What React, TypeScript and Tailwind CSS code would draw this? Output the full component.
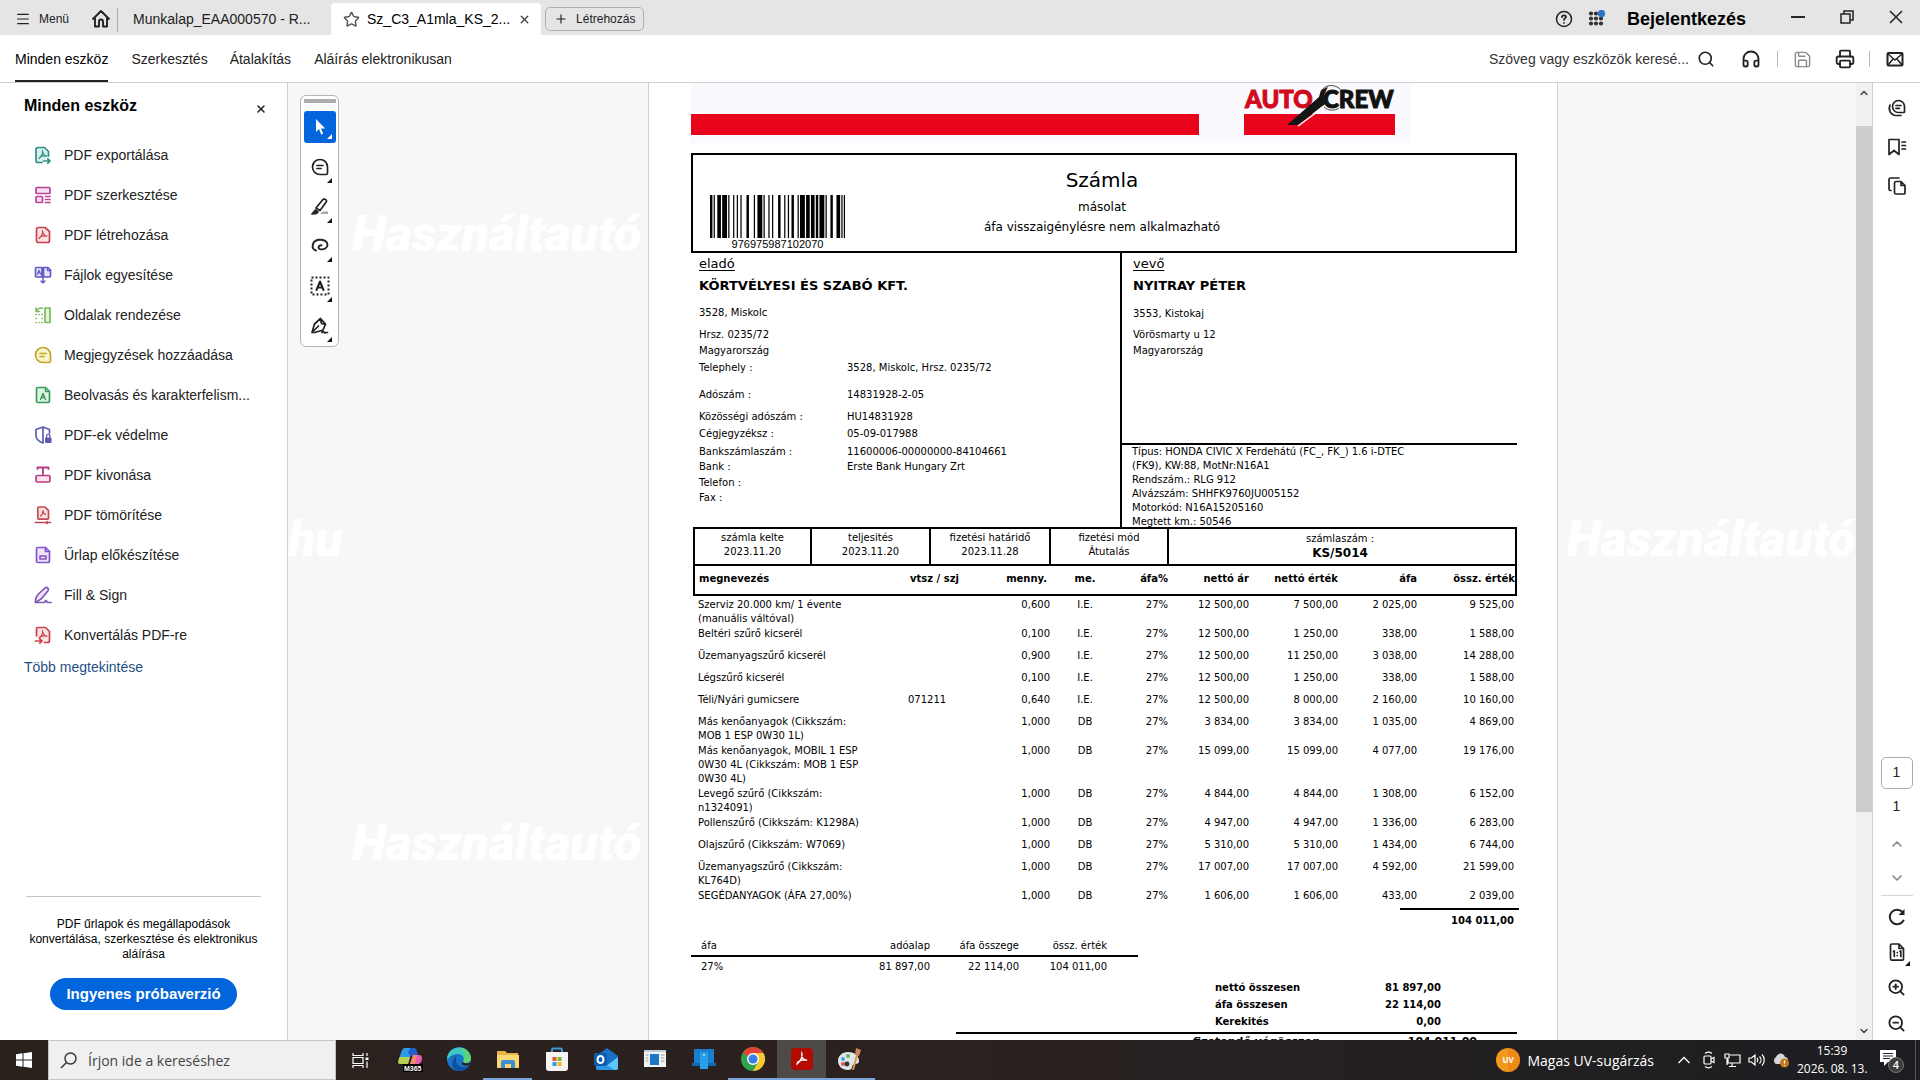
import type { ReactNode } from "react";
import {
  Headphones,
  Search,
  Printer,
  Star,
  ChevronUp,
  ChevronDown,
  ZoomIn,
  ZoomOut,
  Menu,
  Plus,
  X,
  Save,
} from "lucide-react";

type IconProps = { color?: string };

function Glyph({ children, size = 20, color = "#222" }: { children: ReactNode; size?: number; color?: string }) {
  return (
    <svg
      width={size}
      height={size}
      viewBox="0 0 20 20"
      fill="none"
      stroke={color}
      strokeWidth="1.7"
      strokeLinecap="round"
      strokeLinejoin="round"
      className="shrink-0"
      aria-hidden="true"
    >
      {children}
    </svg>
  );
}

const trefoil = "M9.500 5.500c.5 3-1 6-3.500 8M9.600 6.500c.3 2.500 1.900 4.300 4.400 4.700M6.800 12c2-1.100 4.400-1.400 7-.8";

function ExportIcon() {
  return (
    <Glyph color="#2a8f86">
      <path d="M9 17.500H5a2 2 0 0 1-2-2v-11a2 2 0 0 1 2-2h6.500l4 4V11" fill="#d9f1ee" />
      <path d={trefoil} strokeWidth="1.200" />
      <path d="M10.500 16h6.500M14.800 13.800 17 16l-2.200 2.200" />
    </Glyph>
  );
}
function EditIcon() {
  return (
    <Glyph color="#b8429a">
      <rect x="3" y="2.500" width="14" height="6" rx="1" fill="#f9dff2" />
      <rect x="3" y="11.500" width="6.500" height="6" rx="1" fill="#f9dff2" />
      <path d="M12.500 11.500H17M12.500 14.500H17M12.500 17.500H17" />
    </Glyph>
  );
}
function CreateIcon() {
  return (
    <Glyph color="#c9434d">
      <path d="M5.500 2.500H12l4.500 4v9a2 2 0 0 1-2 2h-9a2 2 0 0 1-2-2v-11a2 2 0 0 1 2-2Z" fill="#fbe1e2" />
      <path d={trefoil} strokeWidth="1.200" />
    </Glyph>
  );
}
function MergeIcon() {
  return (
    <Glyph color="#5f5cc4">
      <path d="M3.500 2.500H9v9.500H3.500a1 1 0 0 1-1-1v-7.500a1 1 0 0 1 1-1ZM10.500 2.500H15l2.500 2.500v6a1 1 0 0 1-1 1h-6Z" fill="#e4e3fa" />
      <path d="M4.500 9 6 5.500 7.500 9M10 12v6M8 16l2 2 2-2M14.500 3v2.500H17" strokeWidth="1.400" />
    </Glyph>
  );
}
function OrganizeIcon() {
  return (
    <Glyph color="#7cb85a">
      <rect x="12" y="3" width="5" height="14.500" fill="#e5f5dc" />
      <path d="M3 9.500h.1M3 13.500h.1M3 17.500h.1M6 17.500h.1M9 17.500h.1M9 9.500h.1M9 13.500h.1M6 9.500h.1" />
      <path d="M3.500 6.500c.5-2.500 3-4 6-3.300M3 3v3.500h3.500" strokeWidth="1.500" />
    </Glyph>
  );
}
function CommentIcon({ color = "#bfa52a" }: IconProps) {
  return (
    <Glyph color={color}>
      <path d="M10 2.500a7.500 7.500 0 1 0 0 15h6a1.500 1.500 0 0 0 1.500-1.500v-6A7.500 7.500 0 0 0 10 2.500Z" fill={color === "#222" ? "none" : "#faf4cc"} />
      <path d="M7 8.500h6M7 11.500h4" />
    </Glyph>
  );
}
function OcrIcon() {
  return (
    <Glyph color="#3b9b57">
      <path d="M5 2.500h7.500l4 4v9a2 2 0 0 1-2 2H5a1.500 1.500 0 0 1-1.500-1.500V4A1.500 1.500 0 0 1 5 2.500Z" fill="#ddf3e3" />
      <path d="M12.500 2.500v4h4M7.500 14.500 10 8.500l2.500 6M8.500 12.500h3" strokeWidth="1.400" />
    </Glyph>
  );
}
function ProtectIcon() {
  return (
    <Glyph color="#5c5bb0">
      <path d="M10 2 3 4.500v6c0 3.500 3 6 7 7.500ZM10 2l6.500 2.500V8" />
      <rect x="12" y="12.500" width="6.500" height="5.500" rx="1" fill="#5c5bb0" stroke="none" />
      <path d="M13.500 12.500v-1.300a1.700 1.700 0 0 1 3.500 0v1.300" strokeWidth="1.300" />
    </Glyph>
  );
}
function RedactIcon() {
  return (
    <Glyph color="#b83e83">
      <path d="M4.500 4V2.500h11V4M10 2.500V9" strokeWidth="1.900" />
      <rect x="3" y="10.500" width="14" height="6.500" rx="1.500" fill="#fbe0ee" />
    </Glyph>
  );
}
function CompressIcon() {
  return (
    <Glyph color="#bf4950">
      <path d="M6 2h6l3.500 3.500V13a1.200 1.200 0 0 1-1.200 1.200H6A1.200 1.200 0 0 1 4.800 13V3.200A1.200 1.200 0 0 1 6 2Z" fill="#fbe1e2" />
      <path d="M10 5.500c0 2.500-1 4.500-2.500 5.500M10 6c.2 2 1.200 3 2.700 3.300" strokeWidth="1.200" />
      <path d="M2.500 17.500h15M14 16.500v2" />
    </Glyph>
  );
}
function FormIcon() {
  return (
    <Glyph color="#8455c4">
      <path d="M5 2.500h7.500l4 4v9a2 2 0 0 1-2 2H5a1.500 1.500 0 0 1-1.500-1.500V4A1.500 1.500 0 0 1 5 2.500Z" fill="#eee3fb" />
      <path d="M12.500 2.500v4h4" />
      <rect x="7" y="11" width="6" height="3" />
    </Glyph>
  );
}
function SignIcon() {
  return (
    <Glyph color="#7c55b4">
      <path d="M2.500 17.500c-.3-4 1-6.500 3-8.500l6.500-6c2-1.500 4.500.8 3 2.800L9.500 12.500c-1.500 2-4 3-7 5Z" fill="#ede4f8" />
      <path d="M4 17.500h7c1 0 1-2 2-2s.5 2 1.500 2H18" />
    </Glyph>
  );
}
function ConvertIcon() {
  return (
    <Glyph color="#c9434d">
      <path d="M3.500 11V4a1.500 1.500 0 0 1 1.500-1.500h7.500l4 4v9a2 2 0 0 1-2 2h-3" fill="#fbe1e2" />
      <path d={trefoil} strokeWidth="1.200" />
      <path d="M2.500 16H9M6.800 13.800 9 16l-2.200 2.200" />
    </Glyph>
  );
}

const tools: { label: string; icon: ReactNode }[] = [
  { label: "PDF exportálása", icon: <ExportIcon /> },
  { label: "PDF szerkesztése", icon: <EditIcon /> },
  { label: "PDF létrehozása", icon: <CreateIcon /> },
  { label: "Fájlok egyesítése", icon: <MergeIcon /> },
  { label: "Oldalak rendezése", icon: <OrganizeIcon /> },
  { label: "Megjegyzések hozzáadása", icon: <CommentIcon /> },
  { label: "Beolvasás és karakterfelism...", icon: <OcrIcon /> },
  { label: "PDF-ek védelme", icon: <ProtectIcon /> },
  { label: "PDF kivonása", icon: <RedactIcon /> },
  { label: "PDF tömörítése", icon: <CompressIcon /> },
  { label: "Űrlap előkészítése", icon: <FormIcon /> },
  { label: "Fill & Sign", icon: <SignIcon /> },
  { label: "Konvertálás PDF-re", icon: <ConvertIcon /> },
];

function TitleBar() {
  return (
    <header className="flex h-[35px] shrink-0 items-center bg-[#e5e5e5] text-[#222]">
      <button className="ml-[15px] flex h-full items-center gap-2 pt-[3px] text-[12px]">
        <Menu size={16} strokeWidth={1.8} />
        Menü
      </button>
      <button aria-label="Kezdőlap" className="ml-[22px] flex h-full items-center pt-[2px]">
        <svg width="20" height="20" viewBox="0 0 20 20" fill="none" stroke="#222" strokeWidth="1.900" strokeLinejoin="round">
          <path d="M1.500 10.500 10 2l8.500 8.500M4 9v8.500h4V12.500a2 2 0 0 1 4 0v5h4V9" />
        </svg>
      </button>
      <span className="ml-[6px] mt-1 h-6 w-px bg-[#aaa]" />
      <button className="ml-[15px] mr-[18px] w-[180px] truncate pt-[3px] text-left text-[14px]">Munkalap_EAA000570 - R...</button>
      <div className="flex h-8 w-[210px] items-center self-end rounded-t bg-white pl-3 text-black">
        <Star size={17} strokeWidth={2} className="text-[#555]" />
        <span className="ml-[7px] flex-1 text-[14px]">Sz_C3_A1mla_KS_2...</span>
        <button aria-label="Lap bezárása" className="mr-[10px]">
          <X size={13} strokeWidth={2.500} className="text-[#444]" />
        </button>
      </div>
      <button className="ml-1 mt-[3px] flex h-6 items-center gap-2 rounded-[5px] border border-[#b0b0b0] px-2 text-[12px]">
        <Plus size={14} strokeWidth={2} />
        Létrehozás
      </button>
      <div className="ml-auto flex h-full items-center pt-[2px]">
        <button aria-label="Súgó">
          <svg width="18" height="18" viewBox="0 0 18 18" fill="none" stroke="#222" strokeWidth="1.500" strokeLinecap="round">
            <circle cx="9" cy="9" r="7.500" />
            <path d="M7 7.200C7 4.600 11 4.800 11 7c0 1.400-2 1.500-2 3M9 12.800v.1" strokeWidth="1.700" />
          </svg>
        </button>
        <button aria-label="Alkalmazások" className="ml-[15px]">
          <svg width="18" height="18" viewBox="0 0 18 18" fill="#333">
            {[3.500, 8.500, 13.500].map((y) => [3, 8, 13].map((x) => <circle key={`${x}-${y}`} cx={x} cy={y} r="2.100" />))}
            <circle cx="13.500" cy="3.500" r="3.700" fill="#2f74c9" />
          </svg>
        </button>
        <button className="ml-[21px] w-[120px] text-left text-[18px] font-bold leading-6 text-black">Bejelentkezés</button>
        <button aria-label="Kis méret" className="ml-[43px] pb-1">
          <svg width="16" height="16" viewBox="0 0 16 16" stroke="#111" strokeWidth="1.800"><path d="M1 8h14" /></svg>
        </button>
        <button aria-label="Előző méret" className="ml-[33px] pb-1">
          <svg width="16" height="16" viewBox="0 0 16 16" fill="none" stroke="#222" strokeWidth="1.500">
            <path d="M2 5h9v9H2ZM5 5V2h9v9h-3" />
          </svg>
        </button>
        <button aria-label="Bezárás" className="ml-[33px] mr-4 pb-1">
          <svg width="16" height="16" viewBox="0 0 16 16" stroke="#222" strokeWidth="1.500"><path d="m2 2 12 12M14 2 2 14" /></svg>
        </button>
      </div>
    </header>
  );
}

function NavBar() {
  return (
    <nav className="flex h-12 shrink-0 items-stretch border-b border-[#cfcfcf] bg-white text-[14px] text-[#222]">
      <a href="#eszkozok" className="ml-[15px] flex items-center border-b-2 border-[#222] pt-1 text-black">Minden eszköz</a>
      <a href="#szerkesztes" className="ml-[23px] flex items-center pt-[2px]">Szerkesztés</a>
      <a href="#atalakitas" className="ml-[22px] flex items-center pt-[2px]">Átalakítás</a>
      <a href="#alairas" className="ml-[23px] flex items-center pt-[2px]">Aláírás elektronikusan</a>
      <div className="ml-auto flex items-center pt-px">
        <input
          aria-label="Keresés"
          placeholder="Szöveg vagy eszközök keresé..."
          className="w-[204px] bg-transparent outline-none placeholder:text-[#333] placeholder:opacity-100"
        />
        <button aria-label="Keresés indítása" className="ml-1"><Search size={18} strokeWidth={2.200} /></button>
        <button aria-label="Felolvasás" className="ml-[26px]"><Headphones size={20} strokeWidth={2.200} /></button>
        <span className="ml-4 h-4 w-px bg-[#bbb]" />
        <button aria-label="Mentés" className="ml-[15px] text-[#8a8a8a]"><Save size={19} strokeWidth={1.800} /></button>
        <button aria-label="Nyomtatás" className="ml-[23px]"><Printer size={20} strokeWidth={2.200} /></button>
        <span className="ml-[14px] h-4 w-px bg-[#bbb]" />
        <button aria-label="Küldés" className="ml-4 mr-4">
          <svg width="18" height="18" viewBox="0 0 18 18" fill="none" stroke="#222" strokeWidth="2" strokeLinejoin="round">
            <rect x="1.500" y="3" width="15" height="12.500" rx="1" />
            <path d="m2 4 7 6 7-6M2 15l5-6M16 15l-5-6" strokeWidth="1.500" />
          </svg>
        </button>
      </div>
    </nav>
  );
}

function ToolPanel() {
  return (
    <aside className="flex w-[288px] shrink-0 flex-col border-r border-[#cfcfcf] bg-white text-[#222]">
      <div className="flex items-start justify-between pl-6 pr-5 pt-3">
        <h2 className="text-[16px] font-bold leading-[22px] text-black">Minden eszköz</h2>
        <button aria-label="Panel bezárása" className="mt-2"><X size={12} strokeWidth={3} /></button>
      </div>
      <ul className="mt-[18px]">
        {tools.map((t) => (
          <li key={t.label}>
            <button className="flex h-10 w-full items-center gap-[11px] pl-[33px] text-[14px]">
              {t.icon}
              {t.label}
            </button>
          </li>
        ))}
      </ul>
      <a href="#tobb" className="ml-6 mt-[2px] text-[14px] text-[#1f4f86]">Több megtekintése</a>
      <div className="mx-[26px] mb-[30px] mt-auto border-t border-[#c4c4c4] pt-5 text-center">
        <p className="-mx-3 text-[12px] leading-[15px] text-black">
          PDF űrlapok és megállapodások
          <br />
          konvertálása, szerkesztése és elektronikus
          <br />
          aláírása
        </p>
        <button className="mt-4 h-8 rounded-full bg-[#0265dc] px-4 text-[15px] font-bold text-white">Ingyenes próbaverzió</button>
      </div>
    </aside>
  );
}

function Corner({ color = "#111" }: IconProps) {
  return (
    <svg width="5" height="5" viewBox="0 0 5 5" className="absolute bottom-1 right-1" aria-hidden="true">
      <path d="M5 0v5H0Z" fill={color} />
    </svg>
  );
}

function FloatingTools() {
  const button = "relative flex h-10 w-8 items-center justify-center";
  return (
    <div className="ml-3 mt-3 flex h-[252px] w-[39px] shrink-0 flex-col items-center rounded-md border border-[#b5b5b5] bg-white pt-[3px]">
      <span className="h-1 w-8 bg-[#adadad]" />
      <button aria-label="Kijelölés" className="relative mt-2 flex h-8 w-8 shrink-0 items-center justify-center rounded-[3px] bg-[#0265dc]">
        <svg width="14" height="18" viewBox="0 0 14 18" fill="#fff"><path d="M3 1v13l3-3 2.200 5.500 2-.8L8 10.500h4.200Z" /></svg>
        <Corner color="#fff" />
      </button>
      <button aria-label="Megjegyzés" className={`${button} mt-1`}><CommentIcon color="#222" /><Corner /></button>
      <button aria-label="Kiemelés" className={button}>
        <Glyph>
          <path d="M10 17h8v-2.500h-5Z" fill="#aaa" stroke="none" />
          <path d="M6 11 12.500 3a2 2 0 0 1 3.500 2.300L10 13.500Z" />
          <path d="m5.500 13-3.500 4 4.500-.5 1.500-1.500Z" fill="#222" />
        </Glyph>
        <Corner />
      </button>
      <button aria-label="Rajzolás" className={button}>
        <Glyph><path d="M6 14.500C.5 12.500 2 4.500 9 3.800c5-.5 8.500 1.700 8.500 5 0 3.500-3.500 5-7 4.500-3-.5-2.500-3.800 1-4" strokeWidth="1.900" /></Glyph>
        <Corner />
      </button>
      <button aria-label="Szöveg hozzáadása" className={button}>
        <Glyph>
          <rect x="1.500" y="1.500" width="17" height="17" strokeDasharray="2 2" strokeWidth="2" strokeLinecap="butt" />
          <path d="M6.500 14 10 5.500l3.500 8.500M7.800 11.500h4.400" strokeWidth="2" />
        </Glyph>
        <Corner />
      </button>
      <button aria-label="Aláírás" className={button}>
        <Glyph>
          <path d="M2 16.500 4.500 8l6-5.500 5 5.500-2.500 6-8 2.500ZM2.500 16l6-6M10.500 3l1 4.500 4 1M12 16.500c1.500-3 2.500 2 3.500 0h2" />
        </Glyph>
        <Corner />
      </button>
    </div>
  );
}

const barWidths = [2, 1, 1, 2, 3, 1, 4, 1, 1, 3, 1, 2, 1, 2, 1, 4, 2, 4, 1, 2, 4, 1, 1, 3, 1, 2, 1, 4, 2, 3, 1, 2, 1, 2, 2, 3, 1, 1, 4, 1, 3, 1, 3, 1, 2, 1, 4, 1, 1, 3, 2, 3, 3, 1, 1, 1, 1];

function Barcode() {
  const bars: { x: number; w: number }[] = [];
  let x = 0;
  barWidths.forEach((w, i) => {
    if (i % 2 === 0) bars.push({ x, w });
    x += w;
  });
  return (
    <svg width="135" height="43" viewBox={`0 0 ${x} 43`} preserveAspectRatio="none" aria-hidden="true">
      {bars.map((b) => (
        <rect key={b.x} x={b.x} y="0" width={b.w} height="43" fill="#000" />
      ))}
    </svg>
  );
}

function AutoCrewLogo() {
  return (
    <svg width="156" height="60" viewBox="0 0 156 60" role="img" aria-label="AutoCrew">
      <rect x="0" y="31" width="151" height="21" fill="#e8041b" />
      <text x="1" y="25" fontFamily="Lato" fontWeight="900" fontSize="24" fill="#d20a20" stroke="#d20a20" strokeWidth="1">AUTO</text>
      <text x="79" y="25" fontFamily="Lato" fontWeight="900" fontSize="24" fill="#111" stroke="#111" strokeWidth="1">CREW</text>
      <path d="M43 42 75 14l2-7 7-3-4 8 3 8-6 4-23 18Z" fill="#151515" />
      <path d="M54 43 80 24" stroke="#fff" strokeWidth="1.500" fill="none" />
      <path d="M77 9c3-8 14-8 19-3M80 24c4 4 11 4 15 1" stroke="#444" strokeWidth="1" fill="none" />
    </svg>
  );
}

const seller: [string, string, string][] = [
  ["3528, Miskolc", "", "mt-[9px]"],
  ["Hrsz. 0235/72", "", "mt-2"],
  ["Magyarország", "", "mt-[2px]"],
  ["Telephely :", "3528, Miskolc, Hrsz. 0235/72", "mt-[3px]"],
  ["Adószám :", "14831928-2-05", "mt-[13px]"],
  ["Közösségi adószám :", "HU14831928", "mt-2"],
  ["Cégjegyzéksz :", "05-09-017988", "mt-[3px]"],
  ["Bankszámlaszám :", "11600006-00000000-84104661", "mt-1"],
  ["Bank :", "Erste Bank Hungary Zrt", "mt-px"],
  ["Telefon :", "", "mt-[2px]"],
  ["Fax :", "", "mt-px"],
];

const vehicle = [
  "Típus: HONDA CIVIC X Ferdehátú (FC_, FK_) 1.6 i-DTEC",
  "(FK9), KW:88, MotNr:N16A1",
  "Rendszám.: RLG 912",
  "Alvázszám: SHHFK9760JU005152",
  "Motorkód: N16A15205160",
  "Megtett km.: 50546",
];

const items: string[][] = [
  ["Szerviz 20.000 km/ 1 évente (manuális váltóval)", "", "0,600", "I.E.", "27%", "12 500,00", "7 500,00", "2 025,00", "9 525,00"],
  ["Beltéri szűrő kicserél", "", "0,100", "I.E.", "27%", "12 500,00", "1 250,00", "338,00", "1 588,00"],
  ["Üzemanyagszűrő kicserél", "", "0,900", "I.E.", "27%", "12 500,00", "11 250,00", "3 038,00", "14 288,00"],
  ["Légszűrő kicserél", "", "0,100", "I.E.", "27%", "12 500,00", "1 250,00", "338,00", "1 588,00"],
  ["Téli/Nyári gumicsere", "071211", "0,640", "I.E.", "27%", "12 500,00", "8 000,00", "2 160,00", "10 160,00"],
  ["Más kenőanyagok (Cikkszám: MOB 1 ESP 0W30 1L)", "", "1,000", "DB", "27%", "3 834,00", "3 834,00", "1 035,00", "4 869,00"],
  ["Más kenőanyagok, MOBIL 1 ESP 0W30 4L (Cikkszám: MOB 1 ESP 0W30 4L)", "", "1,000", "DB", "27%", "15 099,00", "15 099,00", "4 077,00", "19 176,00"],
  ["Levegő szűrő (Cikkszám: n1324091)", "", "1,000", "DB", "27%", "4 844,00", "4 844,00", "1 308,00", "6 152,00"],
  ["Pollenszűrő (Cikkszám: K1298A)", "", "1,000", "DB", "27%", "4 947,00", "4 947,00", "1 336,00", "6 283,00"],
  ["Olajszűrő (Cikkszám: W7069)", "", "1,000", "DB", "27%", "5 310,00", "5 310,00", "1 434,00", "6 744,00"],
  ["Üzemanyagszűrő (Cikkszám: KL764D)", "", "1,000", "DB", "27%", "17 007,00", "17 007,00", "4 592,00", "21 599,00"],
  ["SEGÉDANYAGOK (ÁFA 27,00%)", "", "1,000", "DB", "27%", "1 606,00", "1 606,00", "433,00", "2 039,00"],
];

const meta = [
  ["számla kelte", "2023.11.20"],
  ["teljesités", "2023.11.20"],
  ["fizetési határidő", "2023.11.28"],
  ["fizetési mód", "Átutalás"],
];

function Invoice() {
  return (
    <article className="w-[910px] shrink-0 overflow-hidden border-x border-[#cfcfcf] bg-white pl-[42px] font-['DejaVu_Sans',Verdana,sans-serif] text-[10px] leading-[14px] text-black">
      <div className="w-[826px]">
        <div className="flex h-[60px] w-[720px] bg-[#fafafe]">
          <div className="mr-[45px] mt-[31px] h-[21px] w-[508px] bg-[#e8041b]" />
          <AutoCrewLogo />
        </div>
        <header className="mt-[10px] grid h-[100px] grid-cols-[152px_1fr_156px] border-2 border-black">
          <div className="ml-[17px] mt-10 flex w-[135px] flex-col items-center">
            <Barcode />
            <span className="font-['Liberation_Sans',sans-serif] text-[11px] leading-[13px]">976975987102070</span>
          </div>
          <div className="pt-[11px] text-center">
            <h1 className="text-[20px] leading-7">Számla</h1>
            <p className="mt-[3px] text-[12px] leading-5">másolat</p>
            <p className="text-[12px] leading-5">áfa visszaigénylésre nem alkalmazható</p>
          </div>
        </header>
        <div className="flex h-[274px]">
          <section className="w-[429px] pl-2 pt-px">
            <h2 className="text-[13px] leading-5 underline underline-offset-2">eladó</h2>
            <p className="mt-px text-[13px] font-bold leading-[22px]">KÖRTVÉLYESI ÉS SZABÓ KFT.</p>
            <dl>
              {seller.map(([k, v, gap]) => (
                <div key={k} className={`flex ${gap}`}>
                  <dt className="w-[148px]">{k}</dt>
                  <dd>{v}</dd>
                </div>
              ))}
            </dl>
          </section>
          <section className="flex flex-1 flex-col border-l-2 border-black">
            <div className="pl-[11px] pt-px">
              <h2 className="text-[13px] leading-5 underline underline-offset-2">vevő</h2>
              <p className="mt-px text-[13px] font-bold leading-[22px]">NYITRAY PÉTER</p>
              <p className="mt-[10px]">3553, Kistokaj</p>
              <p className="mt-[7px]">Vörösmarty u 12</p>
              <p className="mt-[2px]">Magyarország</p>
            </div>
            <div className="mt-auto h-[84px] border-t-2 border-black pl-[10px]">
              {vehicle.map((line) => (
                <p key={line}>{line}</p>
              ))}
            </div>
          </section>
        </div>
        <div className="ml-[2px] grid h-[37px] grid-cols-[117px_119px_120px_118px_1fr] border-x-2 border-t-2 border-black text-center">
          {meta.map(([k, v]) => (
            <div key={k} className="border-r-2 border-black pt-[2px]">
              <p>{k}</p>
              <p>{v}</p>
            </div>
          ))}
          <div className="pr-1 pt-[3px]">
            <p>számlaszám :</p>
            <p className="text-[12px] font-bold">KS/5014</p>
          </div>
        </div>
        <table className="ml-[2px] w-[824px] table-fixed border-separate border-spacing-0">
          <colgroup>
            <col className="w-[177px]" />
            <col className="w-[115px]" />
            <col className="w-[65px]" />
            <col className="w-[70px]" />
            <col className="w-[48px]" />
            <col className="w-[81px]" />
            <col className="w-[89px]" />
            <col className="w-[79px]" />
            <col />
          </colgroup>
          <thead>
            <tr className="h-8 text-right [&>th]:border-y-2 [&>th]:border-black [&>th]:pb-[2px]">
              <th scope="col" className="border-l-2 pl-1 text-left">megnevezés</th>
              <th scope="col" className="pl-10 text-left">vtsz / szj</th>
              <th scope="col" className="pr-[3px]">menny.</th>
              <th scope="col" className="text-center">me.</th>
              <th scope="col">áfa%</th>
              <th scope="col">nettó ár</th>
              <th scope="col">nettó érték</th>
              <th scope="col">áfa</th>
              <th scope="col" className="border-r-2">össz. érték</th>
            </tr>
          </thead>
          <tbody className="before:block before:h-[2px] before:content-['']">
            {items.map((row) => (
              <tr key={row[0]} className="h-[22px] text-right align-top last:h-[19px] [&>td]:pb-px">
                <td className="pl-[5px] text-left">{row[0]}</td>
                <td className="pl-[38px] text-left">{row[1]}</td>
                <td>{row[2]}</td>
                <td className="text-center">{row[3]}</td>
                {row.slice(4, 8).map((cell, i) => (
                  <td key={i}>{cell}</td>
                ))}
                <td className="pr-[3px]">{row[8]}</td>
              </tr>
            ))}
          </tbody>
        </table>
        <p className="-mr-[2px] ml-auto h-[22px] w-[119px] border-t-2 border-black pr-[5px] pt-1 text-right font-bold">104 011,00</p>
        <table className="mt-[7px] w-[447px] table-fixed border-separate border-spacing-0 text-right">
          <thead>
            <tr className="h-5 [&>th]:border-b-2 [&>th]:border-black [&>th]:font-normal">
              <th scope="col" className="w-[100px] pl-[10px] text-left">áfa</th>
              <th scope="col">adóalap</th>
              <th scope="col" className="w-[89px]">áfa összege</th>
              <th scope="col" className="w-[119px] pr-[31px]">össz. érték</th>
            </tr>
          </thead>
          <tbody>
            <tr className="h-5">
              <td className="pl-[10px] text-left">27%</td>
              <td>81 897,00</td>
              <td>22 114,00</td>
              <td className="pr-[31px]">104 011,00</td>
            </tr>
          </tbody>
        </table>
        <dl className="ml-[524px] mt-[2px] w-[226px] font-bold leading-[17px]">
          <div className="flex justify-between"><dt>nettó összesen</dt><dd>81 897,00</dd></div>
          <div className="flex justify-between"><dt>áfa összesen</dt><dd>22 114,00</dd></div>
          <div className="flex justify-between"><dt>Kerekités</dt><dd>0,00</dd></div>
        </dl>
        <div className="ml-[265px] mt-[2px] flex justify-between border-t-2 border-black pl-[237px] pr-10 pt-px text-[11px] font-bold">
          <span>fizetendő végösszeg</span>
          <span>104 011,00</span>
        </div>
      </div>
    </article>
  );
}

function Watermark({ place, children }: { place: string; children: ReactNode }) {
  return (
    <span
      aria-hidden="true"
      className={`pointer-events-none absolute font-['Roboto',sans-serif] text-[50px] font-black italic leading-[50px] text-white ${place}`}
    >
      {children}
    </span>
  );
}

function ScrollBar() {
  return (
    <div className="flex w-[16px] shrink-0 flex-col items-center bg-[#f0f0f0] text-[#444]">
      <button aria-label="Görgetés fel" className="flex h-5 items-center"><ChevronUp size={12} strokeWidth={3} /></button>
      <div className="mt-[23px] h-[686px] w-full bg-[#cdcdcd]" />
      <button aria-label="Görgetés le" className="mt-auto flex h-[18px] items-center"><ChevronDown size={12} strokeWidth={3} /></button>
    </div>
  );
}

function RightRail() {
  return (
    <aside className="flex w-12 shrink-0 flex-col items-center border-l border-[#cfcfcf] bg-white text-[14px] text-[#222]">
      <button aria-label="Megjegyzések" className="mt-[15px]">
        <Glyph>
          <path d="M11.500 2.500a6 6 0 1 0 0 12h5a1 1 0 0 0 1-1V8.500a6 6 0 0 0-6-6Z" />
          <path d="M9 7.500h5M9 10.300h3.500M3 7c-2 4.500.5 10.500 6 10.500h5" />
        </Glyph>
      </button>
      <button aria-label="Könyvjelzők" className="mt-[19px]">
        <Glyph><path d="M2 2.500h10v15l-5-4-5 4ZM15 5h3.500M15 8.500h3.500M15 12h3.500" /></Glyph>
      </button>
      <button aria-label="Oldalak" className="mt-[19px]">
        <Glyph>
          <path d="M9 5.500h5l4 4V17a1 1 0 0 1-1 1H9a1.500 1.500 0 0 1-1.500-1.500V7A1.500 1.500 0 0 1 9 5.500ZM14 5.500v4h4" />
          <path d="M4 14.500H3.500A1.500 1.500 0 0 1 2 13V3.500A1.500 1.500 0 0 1 3.500 2H12" />
        </Glyph>
      </button>
      <div className="mt-auto flex flex-col items-center pb-[7px]">
        <input aria-label="Oldalszám" defaultValue="1" className="h-8 w-8 rounded-[5px] border border-[#aaa] pb-[3px] text-center outline-none" />
        <span className="mt-[7px] leading-5">1</span>
        <button aria-label="Előző oldal" className="mt-[20px] text-[#888]"><ChevronUp size={16} strokeWidth={2.500} /></button>
        <button aria-label="Következő oldal" className="mt-[18px] text-[#888]"><ChevronDown size={16} strokeWidth={2.500} /></button>
        <span className="mt-[9px] h-px w-8 bg-[#d5d5d5]" />
        <button aria-label="Forgatás" className="mt-[11px]">
          <Glyph><path d="M16.500 13.500a7.300 7.300 0 1 1-1-8.500" strokeWidth="2" /><path d="M17.500 2v6h-6Z" fill="#222" stroke="none" /></Glyph>
        </button>
        <button aria-label="Tényleges méret" className="relative mt-[15px] px-2">
          <Glyph>
            <path d="M5 2h7l4.500 4.500V17a1.200 1.200 0 0 1-1.200 1.200H5A1.500 1.500 0 0 1 3.500 16.700V3.500A1.500 1.500 0 0 1 5 2ZM12 2v4.500h4.500M6.500 9.500l.8-.5v5.500M13 9.500l.8-.5v5.500M10.200 10.500v.1M10.200 13.500v.1" />
          </Glyph>
          <svg width="5" height="5" viewBox="0 0 5 5" className="absolute -bottom-1 right-[5px]"><path d="M5 0v5H0Z" fill="#111" /></svg>
        </button>
        <button aria-label="Nagyítás" className="mt-4"><ZoomIn size={19} strokeWidth={2.300} /></button>
        <button aria-label="Kicsinyítés" className="mt-[17px]"><ZoomOut size={19} strokeWidth={2.300} /></button>
      </div>
    </aside>
  );
}

const apps: { name: string; state: "idle" | "open" | "active"; icon: ReactNode }[] = [
  {
    name: "Microsoft 365 Copilot",
    state: "idle",
    icon: (
      <svg width="26" height="26" viewBox="0 0 26 26">
        <path d="M8 2h8l-5 16H3c-3 0-1-5 0-8s2-8 5-8Z" fill="#2f9be8" />
        <path d="M2.500 11h10.500l-2 7H3c-3 0-1.500-4-.5-7Z" fill="#b8cf4c" />
        <path d="M13 2h4c3 0 3 4 4 7l-7 1-3-3Z" fill="#1f5fd0" />
        <path d="M16 9h6c5 0 3 9-1 9h-8Z" fill="#e85bb0" />
        <path d="M16 9h4l-2 9h-5Z" fill="#f08a6a" />
        <rect x="6" y="18" width="20" height="8" fill="#000" />
        <text x="7" y="25" fontSize="7" fontWeight="700" fill="#fff" fontFamily="Liberation Sans">M365</text>
      </svg>
    ),
  },
  {
    name: "Edge",
    state: "idle",
    icon: (
      <svg width="24" height="24" viewBox="0 0 24 24">
        <circle cx="12" cy="12" r="12" fill="#1673c8" />
        <path d="M1 8C5-2 22-3 24 11c0 5-5 6-8 4 2-3 0-8-5-8C6 7 3 9 0 13c0-2 0-3 1-5Z" fill="#3fc9c0" />
        <path d="M16 1.500c5 2 8 6 8 10 0 4-5 5.500-8 3.500C20 9 18 5 13 1Z" fill="#5fd56b" />
        <path d="M9 13c0 6 6 9 13 6-3 5-9 6-13 4-5-3-5-10 0-14Z" fill="#0d4f9e" />
        <path d="M15.500 15c-1 1-.5 3 2 3.500 2 .3 4 0 5-.5l1-3c-3 2-6 1.500-8 0Z" fill="#2b211d" />
      </svg>
    ),
  },
  {
    name: "Fájlkezelő",
    state: "open",
    icon: (
      <svg width="22" height="22" viewBox="0 0 22 22">
        <path d="M0 3h8l2 2h11v15H0Z" fill="#e9b44c" />
        <path d="M0 7h22v13H0Z" fill="#fbd774" />
        <path d="M4 20v-6a2 2 0 0 1 2-2h10a2 2 0 0 1 2 2v6h-4v-4H8v4Z" fill="#3e8fd0" />
      </svg>
    ),
  },
  {
    name: "Store",
    state: "idle",
    icon: (
      <svg width="24" height="26" viewBox="0 0 24 26">
        <path d="M7 7V4a1.500 1.500 0 0 1 1.500-1.500h7A1.500 1.500 0 0 1 17 4v3" fill="none" stroke="#3a9ad9" strokeWidth="2" />
        <path d="M1 6h22v16a3 3 0 0 1-3 3H4a3 3 0 0 1-3-3Z" fill="#f4f4f4" />
        <path d="M7.500 11h4v4h-4Z" fill="#e8532b" /><path d="M12.500 11h4v4h-4Z" fill="#7db72f" />
        <path d="M7.500 16h4v4h-4Z" fill="#2c9fe0" /><path d="M12.500 16h4v4h-4Z" fill="#f4b521" />
      </svg>
    ),
  },
  {
    name: "Outlook",
    state: "idle",
    icon: (
      <svg width="26" height="24" viewBox="0 0 26 24">
        <path d="M3 9 14 1l11 8v12a2 2 0 0 1-2 2H5a2 2 0 0 1-2-2Z" fill="#1a6fc4" />
        <path d="M25 10v11a2 2 0 0 1-2 2H8Z" fill="#5cc7f5" />
        <path d="M3 12l19 11H5a2 2 0 0 1-2-2Z" fill="#2f95e0" />
        <rect x="1" y="6" width="13" height="13" rx="2" fill="#0b5cad" />
        <ellipse cx="7.500" cy="12.500" rx="3" ry="3.500" fill="none" stroke="#fff" strokeWidth="2" />
      </svg>
    ),
  },
  {
    name: "Hírek",
    state: "idle",
    icon: (
      <svg width="22" height="20" viewBox="0 0 22 20">
        <path d="M0 1h22v17H0Z" fill="#f3f3f3" /><path d="M0 1h22v2H0Z" fill="#bcd" />
        <path d="M6 5h9v11H6Z" fill="#1b78c8" />
        <path d="M1.500 6h3M1.500 9h3M1.500 12h3M17 6h3.500M17 9h3.500M17 12h3.500" stroke="#999" />
      </svg>
    ),
  },
  {
    name: "Telefonkapcsolat",
    state: "idle",
    icon: (
      <svg width="24" height="22" viewBox="0 0 24 22">
        <path d="M2 1h20v14h2v3H0v-3h2Z" fill="#1268b4" /><path d="M2 1h20v14H2Z" fill="#1a7fd0" />
        <path d="M8 4h8v17H8Z" fill="#27a0e8" /><path d="M11 7h2" stroke="#fff" />
      </svg>
    ),
  },
  {
    name: "Chrome",
    state: "open",
    icon: (
      <svg width="24" height="24" viewBox="0 0 24 24">
        <circle cx="12" cy="12" r="12" fill="#2ea24d" />
        <path d="M12 12 1.600 6A12 12 0 0 1 22.400 6Z" fill="#e24135" />
        <path d="M12 6h10.400A12 12 0 0 1 12 24l5.200-9Z" fill="#f7c92f" />
        <circle cx="12" cy="12" r="6" fill="#fff" /><circle cx="12" cy="12" r="4.600" fill="#3d7de8" />
      </svg>
    ),
  },
  {
    name: "Adobe Acrobat",
    state: "active",
    icon: (
      <svg width="22" height="22" viewBox="0 0 22 22">
        <rect width="22" height="22" rx="4" fill="#b30b00" />
        <path d="M10.800 5c1.200 3-1 8-4.800 11 0-2.500 4-4.500 10-4-3 .8-6-2.500-5.200-7Z" fill="none" stroke="#fff" strokeWidth="1.300" />
      </svg>
    ),
  },
  {
    name: "Paint",
    state: "open",
    icon: (
      <svg width="26" height="24" viewBox="0 0 26 24">
        <path d="M10 5c7 0 11 4 11 9 0 4-4 2-6 4s0 5-5 5C4 23 0 19 0 14s4-9 10-9Z" fill="#dfe6ea" />
        <circle cx="5" cy="12" r="2" fill="#3ea7e0" /><circle cx="10" cy="9" r="2" fill="#6cb94a" />
        <circle cx="5" cy="17" r="2" fill="#e2574c" /><circle cx="9" cy="17" r="2.400" fill="#35302d" />
        <path d="m14 23 4-15 2 .5L16 23Z" fill="#d99a4a" /><path d="m17 8 1-7 5 2-2 6Z" fill="#c98a55" />
      </svg>
    ),
  },
];

const appStyle = {
  idle: "border-transparent",
  open: "border-[#7aa7d8]",
  active: "border-[#7aa7d8] bg-[#4e4a48]",
};

function Taskbar() {
  return (
    <footer className="flex h-10 shrink-0 items-stretch bg-linear-to-r from-[#2b211c] via-[#2a2120] to-[#1c1e22] font-['Open_Sans','Noto_Sans',sans-serif] text-white">
      <button aria-label="Start" className="flex w-12 items-center justify-center">
        <svg width="16" height="16" viewBox="0 0 16 16" fill="#fff"><path d="M0 2.200 6.500 1.300v6.200H0ZM7.500 1.200 16 0v7.500H7.500ZM0 8.500h6.500v6.200L0 13.800ZM7.500 8.500H16V16l-8.500-1.200Z" /></svg>
      </button>
      <label className="flex w-[288px] items-center gap-[11px] border border-[#c4c4c4] bg-[#f0f0f0] pl-[11px] text-[#333]">
        <svg width="17" height="17" viewBox="0 0 17 17" fill="none" stroke="#333" strokeWidth="1.400"><circle cx="10.500" cy="6.500" r="5.500" /><path d="M6.500 10.500 1 16" /></svg>
        <input aria-label="Keresés a gépen" placeholder="Írjon ide a kereséshez" className="w-60 bg-transparent text-[14px] outline-none placeholder:text-[#444] placeholder:opacity-100" />
      </label>
      <button aria-label="Feladatnézet" className="flex w-[49px] items-center justify-center">
        <svg width="17" height="17" viewBox="0 0 17 17" fill="none" stroke="#fff" strokeWidth="1.200">
          <path d="M1 1v2.500h10V1M1 16v-2.500h10V16M1 5.500h10v6H1ZM15 1v3M15 9.500V16" /><path d="M13.500 5.500h3v2.500h-3Z" fill="#fff" stroke="none" />
        </svg>
      </button>
      {apps.map((a) => (
        <button key={a.name} aria-label={a.name} className={`flex w-[49px] items-center justify-center border-b-2 ${appStyle[a.state]}`}>
          {a.icon}
        </button>
      ))}
      <div className="ml-auto flex items-center">
        <button className="flex items-center gap-[8px] text-[14px]">
          <svg width="24" height="24" viewBox="0 0 24 24"><circle cx="12" cy="12" r="12" fill="#f09a1d" /><path d="M12 0a12 12 0 0 1 0 24Z" fill="#ee7a15" opacity=".5" /><text x="12" y="15" textAnchor="middle" fontSize="8" fontWeight="700" fill="#fff">UV</text></svg>
          Magas UV-sugárzás
        </button>
        <button aria-label="Rejtett ikonok" className="ml-[23px]">
          <svg width="14" height="10" viewBox="0 0 14 10" fill="none" stroke="#fff" strokeWidth="1.300"><path d="m1.500 8 5.500-5.500L12.500 8" /></svg>
        </button>
        <svg width="16" height="18" viewBox="0 0 16 18" fill="none" stroke="#fff" strokeWidth="1.200" className="ml-[10px]"><rect x="3" y="5" width="7" height="8" rx="1" /><path d="m10 8 3-1.500v5L10 10M4 2.500C6 1 9 1 11 2.500M4 15.500c2 1.500 5 1.500 7 0" /></svg>
        <svg width="17" height="16" viewBox="0 0 17 16" fill="none" stroke="#fff" strokeWidth="1.200" className="ml-[7px]"><path d="M6 3h10v8H4V7M8 11v3M5 14.500h7M1 2h4v4H1ZM3 6v7" /></svg>
        <svg width="17" height="16" viewBox="0 0 17 16" fill="none" stroke="#fff" strokeWidth="1.200" className="ml-[7px]"><path d="M1 6h2.500L7 3v10l-3.500-3H1ZM9 6c1 1 1 3 0 4M11.500 4.500c2 2 2 5 0 7M14 2.500c3 3 3 8 0 11" /></svg>
        <svg width="18" height="16" viewBox="0 0 18 16" className="ml-[7px]"><path d="M4 12a4 4 0 0 1 0-7c2-5 8-4 9 0 4 0 4 7 0 7Z" fill="#d5d5d5" /><circle cx="12.500" cy="11" r="4.500" fill="#c47a1b" /><path d="M12.500 8.500v3M12.500 13v.8" stroke="#fff" strokeWidth="1.200" /></svg>
        <div className="ml-[7px] w-[70px] text-center text-[12px] leading-[18px]">
          <p>15:39</p>
          <p className="whitespace-nowrap">2026. 08. 13.</p>
        </div>
        <button aria-label="Értesítések" className="ml-3 mr-[10px]">
          <svg width="26" height="26" viewBox="0 0 26 26">
            <path d="M1 3h16v12H9l-4 4v-4H1Z" fill="#fff" /><path d="M4 6.500h10M4 9h10M4 11.500h7" stroke="#222" />
            <circle cx="17" cy="18" r="7.500" fill="#3c3c3e" stroke="#777" />
            <text x="17" y="22" textAnchor="middle" fontSize="11" fontWeight="600" fill="#fff">4</text>
          </svg>
        </button>
        <span className="mr-1 h-10 w-px bg-[#555]" />
      </div>
    </footer>
  );
}

export default function App() {
  return (
    <div className="flex h-screen flex-col overflow-hidden bg-white font-['Liberation_Sans',Arial,sans-serif]">
      <TitleBar />
      <NavBar />
      <div className="flex min-h-0 flex-1">
        <ToolPanel />
        <main className="relative flex min-w-0 flex-1 overflow-hidden bg-[#f7f7f7]">
          <Watermark place="left-[64px] top-[126px]">Használtautó</Watermark>
          <Watermark place="left-[64px] top-[735px]">Használtautó</Watermark>
          <Watermark place="left-0 top-[431px]">hu</Watermark>
          <Watermark place="right-0 top-[431px]">Használtautó</Watermark>
          <FloatingTools />
          <div className="ml-[11px] flex min-w-0 flex-1 justify-center overflow-hidden">
            <Invoice />
          </div>
        </main>
        <ScrollBar />
        <RightRail />
      </div>
      <Taskbar />
    </div>
  );
}
